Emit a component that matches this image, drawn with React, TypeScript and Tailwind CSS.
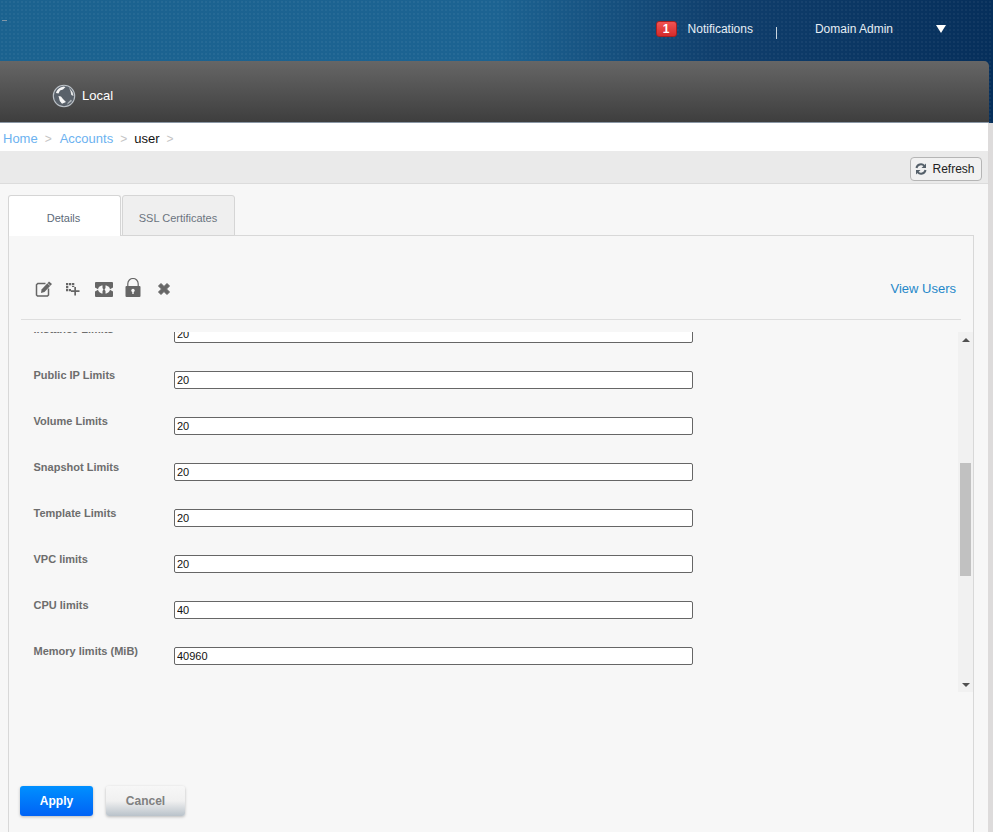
import React from 'react';

const rows = [
  { label: 'Instance Limits', value: '20' },
  { label: 'Public IP Limits', value: '20' },
  { label: 'Volume Limits', value: '20' },
  { label: 'Snapshot Limits', value: '20' },
  { label: 'Template Limits', value: '20' },
  { label: 'VPC limits', value: '20' },
  { label: 'CPU limits', value: '40' },
  { label: 'Memory limits (MiB)', value: '40960' },
];

const LimitRow = ({ label, value }: { label: string; value: string }) => (
  <div className="flex h-[46px] pl-[24px]">
    <span className="w-[141px] -mt-[2px] pl-[0.5px] text-[11px] leading-[13px] font-bold text-[#6d6d6d]">{label}</span>
    <input
      readOnly
      value={value}
      className="w-[519px] h-[18px] px-[2px] bg-white border border-[#666] rounded-[2px] text-[11px] leading-[16px] text-[#111] outline-none"
    />
  </div>
);

const Globe = () => (
  <svg width="24" height="24" viewBox="0 0 24 24" className="shrink-0">
    <circle cx="12" cy="12" r="10.7" fill="#59616a" stroke="#bcc2c8" strokeWidth="1.100" />
    <path d="M4 9 C4.500 6 7 3.200 11.500 2.400 L13.500 3 L11 5.500 L8 6.500 L6.500 9.500 Z" fill="#f6f6f6" />
    <path d="M6.500 12 L9 12.500 L11 15 L14 18 L10 19.800 L7.800 17 Z" fill="#f6f6f6" />
    <path d="M17 3.800 L20.500 8 L21.500 12 L19.300 11 L18.500 7 Z" fill="#e8e8e8" />
    <path d="M15 20.800 L20 17 L19 15.500 L16 18.500 Z" fill="#aeb4b9" />
  </svg>
);

const ActionIcons = () => (
  <div className="flex items-center h-[24px]">
    <svg width="18" height="18" viewBox="0 0 18 18" className="ml-[14px]" fill="none" stroke="#666">
      <path d="M10.500 3.500H2.800L1.500 4.800V15l1 1h10l1-1V8.500" strokeWidth="1.500" />
      <path d="M6.500 9.500L14 1.500l3 2.500-7.500 8-3.500 1z" fill="#666" stroke="none" />
      <path d="M12.500 3.200l2.500 2.500" stroke="#f7f7f7" strokeWidth="0.700" />
    </svg>
    <svg width="16" height="16" viewBox="0 0 16 16" className="ml-[12px]" fill="#666">
      <path d="M1 2h2.300v2.300H1zM4 2h2.300v2.300H4zM7 2h2.300v2.300H7zM1 5h2.300v2.300H1zM7 5h2.300v1H7zM1 8h2.300v2.300H1zM4 8h2v2.300H4z" />
      <path d="M9.300 6h1.700v3.200h3.500v1.700H11v3.600H9.300v-3.600H6v-1.700h3.300z" />
    </svg>
    <svg width="18" height="15" viewBox="0 0 18 15" className="ml-[14px]">
      <rect x="0" y="0" width="18" height="15" rx="1" fill="#666" />
      <ellipse cx="9" cy="7.500" rx="6" ry="4.200" fill="#f7f7f7" />
      <path d="M7.500 2h3v4l-1 1.500 1 1.500v4h-3V9l1-1.500-1-1.500z" fill="#666" />
      <path d="M0 5.500l3.500 2L0 9.500z M18 5.500l-3.500 2 3.500 2z" fill="#f7f7f7" />
    </svg>
    <svg width="16" height="19" viewBox="0 0 16 19" className="ml-[12px] mb-[3px]">
      <path d="M2.800 9V5.700a5.200 5.200 0 0 1 10.400 0V9" fill="none" stroke="#666" strokeWidth="1.200" />
      <rect x="0.500" y="8" width="15" height="11" rx="1" fill="#666" />
      <circle cx="8" cy="12.500" r="1.700" fill="#f7f7f7" />
      <rect x="7.300" y="13" width="1.400" height="3" fill="#f7f7f7" />
    </svg>
    <svg width="14" height="14" viewBox="0 0 14 14" className="ml-[16px]">
      <path d="M1.500 4L4 1.500 7 4.500l3-3L12.500 4l-3 3 3 3L10 12.500l-3-3-3 3L1.500 10l3-3z" fill="#666" stroke="#666" strokeWidth="1" strokeLinejoin="round" />
    </svg>
  </div>
);

const RefreshIcon = () => (
  <svg width="12" height="12" viewBox="0 0 12 12" fill="none" className="mr-[5px]">
    <path d="M1.500 5A4.500 4.500 0 0 1 9.300 2.800" stroke="#55606a" strokeWidth="2" />
    <path d="M11 0.500V5H6.500z" fill="#55606a" />
    <path d="M10.500 7A4.500 4.500 0 0 1 2.700 9.200" stroke="#55606a" strokeWidth="2" />
    <path d="M1 11.500V7H5.500z" fill="#55606a" />
  </svg>
);

export default function App() {
  return (
    <div className="w-[993px] h-[832px] overflow-hidden bg-[#dddbdb] font-['Liberation_Sans',Arial,sans-serif]">
      {/* top bar + project bar share the blue backdrop */}
      <div className="relative h-[123px] bg-[linear-gradient(90deg,#1b628f_0%,#1c6392_50%,#103f6d_72%,#062f5b_100%)]">
        <div className="absolute inset-0 bg-[radial-gradient(rgba(255,255,255,0.045)_1px,transparent_1px)] bg-[length:4px_4px]" />
        <span className="absolute left-[2px] top-[20px] w-[5px] h-[1px] bg-[#7f96a8]" />

        <div className="relative h-[61px] flex justify-end text-[12px] text-[#e6eef5]">
          <div className="flex items-center h-[21px] mt-[18px] mr-[47px]">
            <span className="w-[21px] h-[16px] rounded-[3px] bg-[linear-gradient(#f25353,#d52b2b)] border border-[#a82020] text-white text-[12px] font-bold leading-[14px] text-center">1</span>
            <span className="ml-[11px]">Notifications</span>
            <span className="ml-[23px] w-[1px] h-[12px] mt-[8px] bg-[#c9d6e0]" />
            <span className="ml-[38px]">Domain Admin</span>
            <span className="ml-[43px] w-0 h-0 border-x-[5px] border-x-transparent border-t-[8px] border-t-white" />
          </div>
        </div>

        <div className="relative w-[989px] h-[62px] rounded-tr-[5px] bg-[linear-gradient(#666666,#3e3e3e)] border-b border-b-[#8a97a5] flex items-center pl-[52px] pt-[9px]">
          <Globe />
          <span className="ml-[6px] text-[13px] text-white">Local</span>
        </div>
      </div>

      <div className="w-[988px]">
        {/* breadcrumb */}
        <div className="h-[28px] bg-white flex items-center pl-[3px] pt-[3px] text-[13px]">
          <span className="text-[#6cb2f0]">Home</span>
          <span className="ml-[7px] text-[#c4c4c4] text-[12px]">&gt;</span>
          <span className="ml-[8px] text-[#6cb2f0]">Accounts</span>
          <span className="ml-[7px] text-[#c4c4c4] text-[12px]">&gt;</span>
          <span className="ml-[7px] text-[#111]">user</span>
          <span className="ml-[7px] text-[#c4c4c4] text-[12px]">&gt;</span>
        </div>

        {/* toolbar */}
        <div className="h-[33px] bg-[#eaeaea] border-b border-b-[#dcdcdc] shadow-[0_1px_1px_rgba(0,0,0,0.06)] flex items-center justify-end pr-[6px] pt-[4px]">
          <button className="h-[24px] w-[72px] flex items-center justify-center pr-[2px] rounded-[4px] border border-[#b5b5b5] bg-[#f1f1f1] text-[12px] text-[#222]">
            <RefreshIcon />
            Refresh
          </button>
        </div>

        {/* content */}
        <div className="h-[648px] bg-[#f7f7f7] pl-[8px] pr-[14px] pt-[11px]">
          <div className="flex h-[41px] relative z-10">
            <div className="w-[113px] h-[41px] bg-white border border-[#d5d5d5] border-b-0 rounded-t-[3px] flex items-center justify-center pt-[5px] pr-[2px] text-[11px] text-[#5d6a78]">Details</div>
            <div className="ml-[1px] w-[113px] h-[41px] bg-[#efefef] border border-[#d5d5d5] rounded-t-[3px] flex items-center justify-center pt-[5px] pr-[1px] text-[11px] text-[#6b7480]">SSL Certificates</div>
          </div>

          <div className="h-[610px] -mt-[1px] bg-[#f7f7f7] border border-[#d8d8d8] flex flex-col">
            <div className="h-[84px] mx-[12px] border-b border-b-[#dedede] flex items-center justify-between pt-[23px] pr-[5px]">
              <ActionIcons />
              <span className="text-[13px] text-[#1f87c9]">View Users</span>
            </div>

            <div className="flex h-[360px] mt-[12px]">
              <div className="flex-1 overflow-hidden">
                <div className="-mt-[7px]">
                  {rows.map((row) => (
                    <LimitRow key={row.label} {...row} />
                  ))}
                </div>
              </div>
              <div className="w-[15px] bg-[#f1f1f1] flex flex-col items-center relative">
                <span className="absolute top-[6px] w-0 h-0 border-x-[4px] border-x-transparent border-b-[4px] border-b-[#505050]" />
                <div className="absolute top-[131px] w-[11px] h-[113px] bg-[#c1c1c1]" />
                <span className="absolute bottom-[5px] w-0 h-0 border-x-[4px] border-x-transparent border-t-[4px] border-t-[#505050]" />
              </div>
            </div>

            <div className="flex items-center gap-[12px] pl-[11px] mt-[94px]">
              <button className="w-[73px] h-[30px] rounded-[3px] bg-[linear-gradient(#0090ff,#0062f5)] shadow-[0_1px_3px_rgba(0,0,0,0.25)] text-[12px] font-bold text-white">Apply</button>
              <button className="w-[79px] h-[30px] ml-[1px] rounded-[3px] bg-[linear-gradient(#f7f7f7_0%,#f0f0f0_50%,#b9c2ca_100%)] shadow-[0_1px_3px_rgba(0,0,0,0.25)] text-[12px] font-bold text-[#808080]">Cancel</button>
            </div>
          </div>
        </div>
      </div>
    </div>
  );
}
